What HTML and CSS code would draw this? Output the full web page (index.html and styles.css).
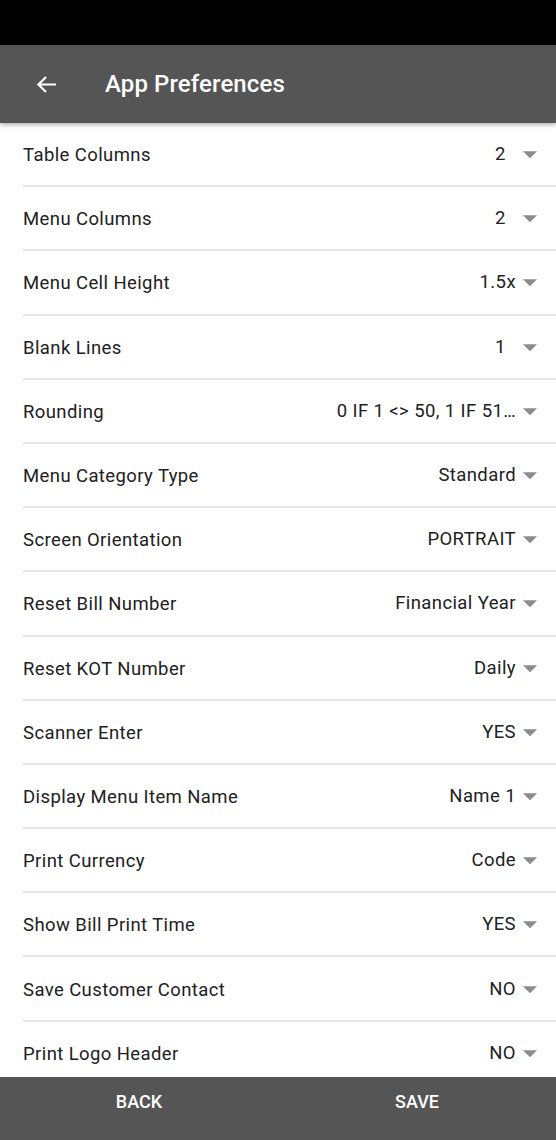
FILE: index.html
```html
<!DOCTYPE html>
<html lang="en">
<head>
    <meta charset="UTF-8">
    <title>App Preferences</title>
    <link rel="stylesheet" href="styles.css">
</head>
<body>
    <div class="screen">
        <div class="status-bar"></div>

        <header class="app-bar">
            <svg class="back-icon" viewBox="0 0 22 20"><path d="M21 10H2.5M10.5 2L2.5 10l8 8"/></svg>
            <h1>App Preferences</h1>
        </header>

        <div class="pref-list">
            <div class="pref-row"><span class="pref-label">Table Columns</span><span class="pref-value short">2</span><svg class="drop" viewBox="0 0 24 24"><path d="M7 10l5 5 5-5z"/></svg></div>
            <div class="pref-row"><span class="pref-label">Menu Columns</span><span class="pref-value short">2</span><svg class="drop" viewBox="0 0 24 24"><path d="M7 10l5 5 5-5z"/></svg></div>
            <div class="pref-row"><span class="pref-label">Menu Cell Height</span><span class="pref-value">1.5x</span><svg class="drop" viewBox="0 0 24 24"><path d="M7 10l5 5 5-5z"/></svg></div>
            <div class="pref-row"><span class="pref-label">Blank Lines</span><span class="pref-value short">1</span><svg class="drop" viewBox="0 0 24 24"><path d="M7 10l5 5 5-5z"/></svg></div>
            <div class="pref-row"><span class="pref-label">Rounding</span><span class="pref-value">0 IF 1 &lt;&gt; 50, 1 IF 51…</span><svg class="drop" viewBox="0 0 24 24"><path d="M7 10l5 5 5-5z"/></svg></div>
            <div class="pref-row"><span class="pref-label">Menu Category Type</span><span class="pref-value">Standard</span><svg class="drop" viewBox="0 0 24 24"><path d="M7 10l5 5 5-5z"/></svg></div>
            <div class="pref-row"><span class="pref-label">Screen Orientation</span><span class="pref-value">PORTRAIT</span><svg class="drop" viewBox="0 0 24 24"><path d="M7 10l5 5 5-5z"/></svg></div>
            <div class="pref-row"><span class="pref-label">Reset Bill Number</span><span class="pref-value">Financial Year</span><svg class="drop" viewBox="0 0 24 24"><path d="M7 10l5 5 5-5z"/></svg></div>
            <div class="pref-row"><span class="pref-label">Reset KOT Number</span><span class="pref-value">Daily</span><svg class="drop" viewBox="0 0 24 24"><path d="M7 10l5 5 5-5z"/></svg></div>
            <div class="pref-row"><span class="pref-label">Scanner Enter</span><span class="pref-value">YES</span><svg class="drop" viewBox="0 0 24 24"><path d="M7 10l5 5 5-5z"/></svg></div>
            <div class="pref-row"><span class="pref-label">Display Menu Item Name</span><span class="pref-value">Name 1</span><svg class="drop" viewBox="0 0 24 24"><path d="M7 10l5 5 5-5z"/></svg></div>
            <div class="pref-row"><span class="pref-label">Print Currency</span><span class="pref-value">Code</span><svg class="drop" viewBox="0 0 24 24"><path d="M7 10l5 5 5-5z"/></svg></div>
            <div class="pref-row"><span class="pref-label">Show Bill Print Time</span><span class="pref-value">YES</span><svg class="drop" viewBox="0 0 24 24"><path d="M7 10l5 5 5-5z"/></svg></div>
            <div class="pref-row"><span class="pref-label">Save Customer Contact</span><span class="pref-value">NO</span><svg class="drop" viewBox="0 0 24 24"><path d="M7 10l5 5 5-5z"/></svg></div>
            <div class="pref-row"><span class="pref-label">Print Logo Header</span><span class="pref-value">NO</span><svg class="drop" viewBox="0 0 24 24"><path d="M7 10l5 5 5-5z"/></svg></div>
        </div>

        <footer class="bottom-bar">
            <button class="bar-btn">BACK</button>
            <button class="bar-btn">SAVE</button>
        </footer>
    </div>
</body>
</html>
```

FILE: styles.css
```css
body {
    margin: 0;
    font-family: Roboto, "Liberation Sans", sans-serif;
    background-color: #fff;
}
.screen {
    height: 1140px;
    display: flex;
    flex-direction: column;
    overflow: hidden;
}
.status-bar {
    height: 45px;
    background-color: #000;
    flex-shrink: 0;
}
.app-bar {
    height: 78px;
    flex-shrink: 0;
    background-color: #555;
    display: flex;
    align-items: center;
    padding-left: 36px;
    box-shadow: 0 2px 4px rgba(0, 0, 0, 0.3);
    position: relative;
    z-index: 1;
}
.back-icon {
    width: 21px;
    height: 19px;
    fill: none;
    stroke: #fff;
    stroke-width: 2.3;
}
.app-bar h1 {
    margin: 0 0 0 48px;
    color: #fff;
    font-size: 24px;
    font-weight: 500;
    letter-spacing: 0.1px;
}
.pref-list {
    flex: 1;
    overflow: hidden;
}
.pref-row {
    height: 62.2px;
    margin-left: 23px;
    border-bottom: 2px solid #e6e6e6;
    display: flex;
    align-items: center;
    font-size: 18.5px;
    letter-spacing: 0.4px;
    color: #212121;
}
.pref-label {
    flex: 1;
    padding-top: 2px;
}
.pref-value {
    text-align: left;
}
.pref-value.short {
    min-width: 21px;
}
.drop {
    width: 34px;
    height: 34px;
    fill: #8c8c8c;
    margin-left: -3px;
    margin-right: 9px;
}
.bottom-bar {
    height: 63px;
    flex-shrink: 0;
    background-color: #555;
    display: flex;
}
.bar-btn {
    flex: 1;
    border: none;
    background: none;
    color: #fff;
    font-family: Roboto, "Liberation Sans", sans-serif;
    font-size: 18px;
    font-weight: 500;
    padding: 0 0 14px;
}
```
